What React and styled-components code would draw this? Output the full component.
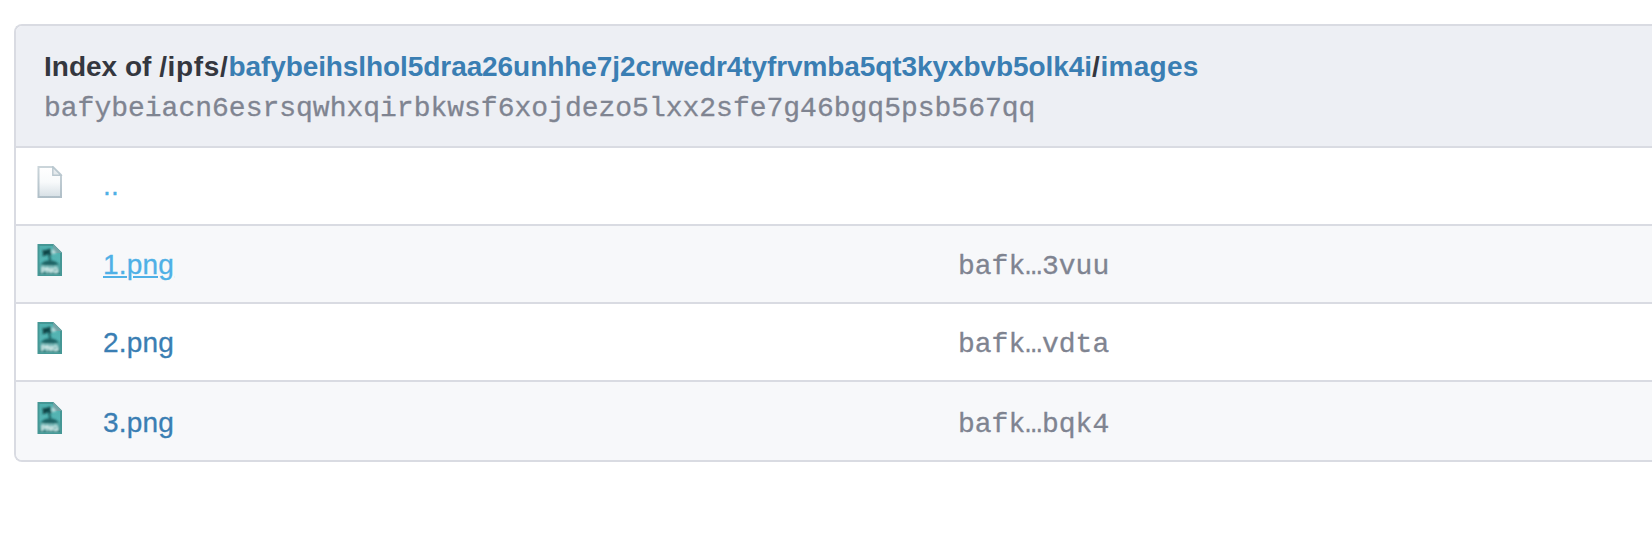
import React from 'react';
import styled, { createGlobalStyle } from 'styled-components';

const Global = createGlobalStyle`
  * { box-sizing: border-box; }
  body {
    margin: 0;
    background: #fff;
    overflow: hidden;
    font-family: "Liberation Sans", Arial, sans-serif;
    font-size: 28px;
    color: #34373f;
  }
`;

const Page = styled.main`
  height: 546px;
  padding: 24px 0 0 14px;
  overflow: hidden;
`;

const Panel = styled.section`
  border: 2px solid #d9dbe2;
  border-right: 0;
  border-radius: 8px 0 0 8px;
  overflow: hidden;
`;

const Header = styled.header`
  height: 122px;
  padding: 21px 28px 0;
  background: #edeff4;
  border-bottom: 2px solid #d9dbe2;
  white-space: nowrap;
`;

const Title = styled.h1`
  margin: 0;
  font-size: 28px;
  font-weight: 700;
  line-height: 40px;
`;

const Namespace = styled.span`
  letter-spacing: 0.65px;
`;

const Crumb = styled.a`
  color: #3a7eb3;
  text-decoration: none;
  letter-spacing: ${(p) => p.$tracking || 0}px;
`;

const Hash = styled.div`
  font-family: "Courier New", "Liberation Mono", monospace;
  font-size: 28px;
  line-height: 44px;
  color: #7f8491;
  -webkit-text-stroke: 0.3px #7f8491;
`;

const Row = styled.div`
  display: grid;
  grid-template-columns: 87px 855px 1fr;
  height: 78px;
  padding-top: ${(p) => (p.$last ? 2 : 0)}px;
  background: ${(p) => (p.$shaded ? '#f7f8fa' : '#fff')};
  border-bottom: ${(p) => (p.$last ? 0 : 2)}px solid #d9dbe2;
`;

const IconCell = styled.div`
  padding: 18px 0 0 18px;
  svg { display: block; }
`;

const FileName = styled.div`
  padding-top: ${(p) => (p.$parent ? 18 : 19)}px;
  line-height: 40px;
`;

const FileLink = styled.a`
  color: ${(p) => (p.$light ? '#4fb0e6' : '#3a7eb3')};
  letter-spacing: 0.2px;
  text-decoration: ${(p) => (p.$underlined ? 'underline' : 'none')};
  text-decoration-thickness: 2px;
  text-underline-offset: 2px;
  -webkit-text-stroke: 0.3px currentColor;
`;

const ShortHash = styled(Hash)`
  padding-top: 19px;
`;

const BlankIcon = () => (
  <svg width="32" height="32" viewBox="0 0 32 32">
    <defs>
      <linearGradient id="paper" x1="0" y1="0" x2="0" y2="1">
        <stop offset="0" stopColor="#fff" />
        <stop offset=".5" stopColor="#f8fafb" />
        <stop offset="1" stopColor="#d6dfe5" />
      </linearGradient>
      <linearGradient id="edge" x1="0" y1="0" x2="0" y2="1">
        <stop offset="0" stopColor="#cbd5da" />
        <stop offset="1" stopColor="#b0bfc8" />
      </linearGradient>
    </defs>
    <path d="M4.5 1H19l8 8v22H4.5z" fill="url(#paper)" stroke="url(#edge)" strokeWidth="2" />
    <path d="M18.8 1v8.3H27z" fill="#e5eaed" stroke="#b9c7cf" strokeWidth="1.4" />
  </svg>
);

const PngIcon = () => (
  <svg width="32" height="32" viewBox="0 0 32 32">
    <defs>
      <linearGradient id="teal" x1="0" y1="0" x2="0" y2="1">
        <stop offset="0" stopColor="#4fafad" />
        <stop offset=".55" stopColor="#55b5b4" />
        <stop offset="1" stopColor="#377f7d" />
      </linearGradient>
      <filter id="soften" x="-10%" y="-10%" width="120%" height="120%">
        <feGaussianBlur stdDeviation="0.85" />
      </filter>
    </defs>
    <path d="M4.5 1H19l8 8v22H4.5z" fill="url(#teal)" stroke="#459795" strokeWidth="2" />
    <path d="M19 0l9 9h-8.5z" fill="#72a4a6" />
    <g filter="url(#soften)">
      <path d="M18 4.5l4.5 4.5-4.5 1z" fill="#c4e3e3" />
      <path d="M8 6.5l4.3-.6 3.5-1.2 1.5 1-1.6 2.2 2.5 2-1.5 1.4-3-1.3-2.9 1.8L8 12l1.3-2.2z" fill="#0f4345" />
      <path d="M14 9.5c1.5 2.2 2 4.3 2.1 7.4" fill="none" stroke="#1c5f60" strokeWidth="2" />
      <path d="M7 20.5c1.5-2.5 4.5-3.8 8.5-3.9 4.5.1 7.5 1.5 9 3.9-5 .9-12 .9-17.5 0z" fill="#1e6263" />
      <text x="6.8" y="29.3" textLength="18" lengthAdjust="spacingAndGlyphs" fontFamily="Liberation Sans, sans-serif" fontWeight="700" fontSize="9" fill="#e6f5f4" stroke="#e6f5f4" strokeWidth=".4">PNG</text>
    </g>
  </svg>
);

const files = [
  { name: '..', light: true, parent: true },
  { name: '1.png', hash: 'bafk…3vuu', light: true, underlined: true },
  { name: '2.png', hash: 'bafk…vdta' },
  { name: '3.png', hash: 'bafk…bqk4' },
];

export default function App() {
  return (
    <Page>
      <Global />
      <Panel>
        <Header>
          <Title>
            Index of <Namespace>/ipfs/</Namespace>
            <Crumb $tracking={-0.08}>bafybeihslhol5draa26unhhe7j2crwedr4tyfrvmba5qt3kyxbvb5olk4i</Crumb>
            <Namespace>/</Namespace>
            <Crumb $tracking={0.3}>images</Crumb>
          </Title>
          <Hash>bafybeiacn6esrsqwhxqirbkwsf6xojdezo5lxx2sfe7g46bgq5psb567qq</Hash>
        </Header>
        {files.map((file, i) => (
          <Row key={file.name} $shaded={i % 2 === 1} $last={i === files.length - 1}>
            <IconCell>{file.parent ? <BlankIcon /> : <PngIcon />}</IconCell>
            <FileName $parent={file.parent}>
              <FileLink $light={file.light} $underlined={file.underlined}>{file.name}</FileLink>
            </FileName>
            <ShortHash>{file.hash}</ShortHash>
          </Row>
        ))}
      </Panel>
    </Page>
  );
}
